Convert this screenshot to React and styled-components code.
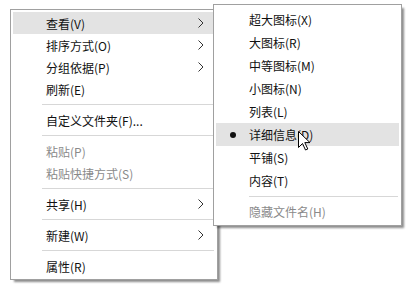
import React from 'react';
import styled, { createGlobalStyle } from 'styled-components';

const GlobalStyle = createGlobalStyle`
  html, body {
    margin: 0;
    padding: 0;
    background: #fff;
  }
  body {
    font-family: "Noto Sans CJK SC", "Microsoft YaHei", sans-serif;
  }
`;

const Stage = styled.div`
  position: relative;
  width: 412px;
  height: 284px;
  overflow: hidden;
  background: #fff;
  padding: 9px 0 0 10px;
  box-sizing: border-box;
`;

const Menu = styled.div`
  box-sizing: border-box;
  width: ${(p) => p.$width}px;
  padding: ${(p) => p.$pad};
  background: #fff;
  border: 1px solid #a0a0a0;
  box-shadow: 3px 3px 2px -1px rgba(0, 0, 0, 0.45);
  display: flex;
  flex-direction: column;
`;

// 하위 메뉴는 본 메뉴 위에 겹쳐 뜸
const SubMenuLayer = styled(Menu)`
  position: absolute;
  left: 213px;
  top: 4px;
`;

const Row = styled.div`
  display: flex;
  align-items: center;
  height: ${(p) => p.$h}px;
  padding-right: 11px;
  font-size: 12px;
  color: ${(p) => (p.$disabled ? '#8a8a8a' : '#111')};
  background: ${(p) => (p.$active ? '#e3e3e3' : 'transparent')};
  white-space: nowrap;
`;

const Gutter = styled.span`
  flex: 0 0 33px;
  display: flex;
  align-items: center;
  padding-left: 14px;
  box-sizing: border-box;
`;

const Bullet = styled.span`
  width: 6px;
  height: 6px;
  border-radius: 50%;
  background: #111;
`;

const Label = styled.span`
  flex: 1;
`;

const Separator = styled.div`
  height: ${(p) => p.$h}px;
  display: flex;
  align-items: center;
  padding-left: ${(p) => p.$indent}px;
  padding-right: 1px;

  &::after {
    content: '';
    flex: 1;
    height: 1px;
    background: #d7d7d7;
  }
`;

const Cursor = styled.svg`
  position: absolute;
  left: 298px;
  top: 131px;
`;

const Chevron = () => (
  <svg width="6" height="10" viewBox="0 0 6 10">
    <path d="M0.5 0.5 L5 5 L0.5 9.5" fill="none" stroke="#333" strokeWidth="1" />
  </svg>
);

const mainItems = [
  { label: '查看(V)', sub: true, active: true },
  { label: '排序方式(O)', sub: true },
  { label: '分组依据(P)', sub: true },
  { label: '刷新(E)' },
  'sep',
  { label: '自定义文件夹(F)...' },
  'sep',
  { label: '粘贴(P)', disabled: true },
  { label: '粘贴快捷方式(S)', disabled: true },
  'sep',
  { label: '共享(H)', sub: true },
  'sep',
  { label: '新建(W)', sub: true },
  'sep',
  { label: '属性(R)' },
];

const viewItems = [
  { label: '超大图标(X)' },
  { label: '大图标(R)' },
  { label: '中等图标(M)' },
  { label: '小图标(N)' },
  { label: '列表(L)' },
  { label: '详细信息(D)', active: true, checked: true },
  { label: '平铺(S)' },
  { label: '内容(T)' },
  'sep',
  { label: '隐藏文件名(H)', disabled: true },
];

function MenuItems({ items, rowH, sepH, indent }) {
  return items.map((it, i) =>
    it === 'sep' ? (
      <Separator key={i} $h={sepH} $indent={indent} />
    ) : (
      <Row key={i} $h={rowH} $active={it.active} $disabled={it.disabled}>
        <Gutter>{it.checked && <Bullet />}</Gutter>
        <Label>{it.label}</Label>
        {it.sub && <Chevron />}
      </Row>
    )
  );
}

export default function App() {
  return (
    <>
      <GlobalStyle />
      <Stage>
        <Menu $width={208} $pad="2px 2px 2px 2px">
          <MenuItems items={mainItems} rowH={22} sepH={9} indent={29} />
        </Menu>

        <SubMenuLayer $width={189} $pad="3px 2px 2px 2px">
          <MenuItems items={viewItems} rowH={23} sepH={8} indent={33} />
        </SubMenuLayer>

        {/* 마우스 커서 */}
        <Cursor width="13" height="21" viewBox="0 0 13 21">
          <path
            d="M0.5 0.5 L0.5 16.5 L4.5 12.5 L7.5 19 L9.8 18 L6.8 11.6 L12 11.6 Z"
            fill="#fff"
            stroke="#000"
            strokeWidth="1"
          />
        </Cursor>
      </Stage>
    </>
  );
}
